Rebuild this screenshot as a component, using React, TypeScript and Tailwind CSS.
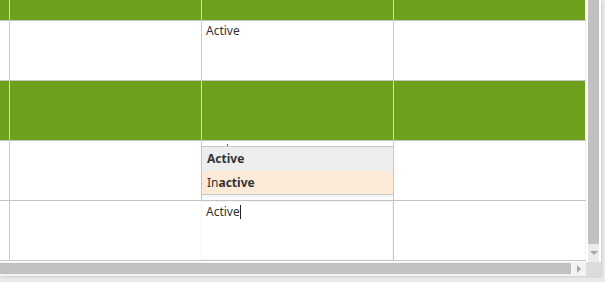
const font = { fontFamily: '"Noto Sans", "Open Sans", sans-serif' };

function Row({ green, children }: { green?: boolean; children?: React.ReactNode[] }) {
  const bg = green ? "bg-[#6ca01d]" : "bg-white";
  const line = green ? "border-[#d6dcc8]" : "border-[#cacaca]";
  const cells = children ?? [];
  return (
    <div className={`flex h-[60px] border-b border-[#c4c4c4] ${bg}`}>
      <div className={`w-[10px] shrink-0 border-r ${line}`} />
      <div className={`w-[192px] shrink-0 border-r ${line}`}>{cells[0]}</div>
      <div className={`w-[192px] shrink-0 border-r ${line}`}>{cells[1]}</div>
      <div className={`w-[192px] shrink-0 border-r border-[#f2f2f2]`}>{cells[2]}</div>
    </div>
  );
}

export default function App() {
  return (
    <div className="w-[605px] h-[282px] bg-[#e9e9e9] overflow-hidden text-[12px] text-[#333]" style={font}>
      <div className="w-[601px] h-[276px] bg-white flex flex-col shadow-[1px_1px_2px_rgba(0,0,0,0.12)]">
        <div className="flex h-[262px]">
          {/* grid */}
          <div className="relative w-[586px] shrink-0 h-[261px]">
            <div className="flex h-[21px] border-b border-[#c4c4c4] bg-[#6ca01d]">
              <div className="w-[10px] shrink-0 border-r border-[#d6dcc8]" />
              <div className="w-[192px] shrink-0 border-r border-[#d6dcc8]" />
              <div className="w-[192px] shrink-0 border-r border-[#d6dcc8]" />
              <div className="w-[192px] shrink-0 border-r border-[#f2f2f2]" />
            </div>
            <Row>
              {[null, <div key="a" className="pl-[4px] pt-[2px] leading-[16px]">Active</div>, null]}
            </Row>
            <Row green />
            <Row>
              {[null, <div key="b" className="ml-[25px] mt-[3px] w-px h-[2px] bg-[#555]" />, null]}
            </Row>
            <Row />

            {/* dropdown list */}
            <div className="absolute left-[201px] top-[146px] w-[193px] border border-[#c8c8c8] bg-white shadow-[0_3px_3px_rgba(0,0,0,0.05)]">
              <div className="h-[24px] bg-[#ededed] pl-[5px] flex items-center font-bold">Active</div>
              <div className="h-[23px] bg-[#faead7] pl-[5px] flex items-center">
                In<span className="font-bold">active</span>
              </div>
            </div>

            {/* editor */}
            <div className="absolute left-[201px] top-[201px] w-[192px] h-[59px] bg-white border border-[#f4f4f4] pl-[4px] pt-[2px] leading-[16px] flex items-start">
              <span>Active</span>
              <span className="w-px h-[14px] bg-[#222] mt-[1px]" />
            </div>
          </div>

          {/* vertical scrollbar */}
          <div className="w-[15px] shrink-0 flex flex-col pl-[2px] pr-[2px] bg-white">
            <div className="h-[244px] bg-[#c1c1c1]" />
            <div className="flex-1 bg-[#ebebeb] flex items-center justify-center">
              <div className="w-0 h-0 border-l-[4px] border-r-[4px] border-t-[4px] border-l-transparent border-r-transparent border-t-[#a8a8a8]" />
            </div>
          </div>
        </div>

        {/* horizontal scrollbar */}
        <div className="flex h-[14px]">
          <div className="w-[586px] shrink-0 pt-px pb-[2px] flex bg-[#f3f3f3]">
            <div className="w-[571px] bg-[#c1c1c1]" />
            <div className="flex-1 flex items-center justify-center">
              <div className="w-0 h-0 border-t-[4px] border-b-[4px] border-l-[4px] border-t-transparent border-b-transparent border-l-[#a8a8a8]" />
            </div>
          </div>
          <div className="flex-1 bg-[#dcdcdc]" />
        </div>
      </div>
    </div>
  );
}
